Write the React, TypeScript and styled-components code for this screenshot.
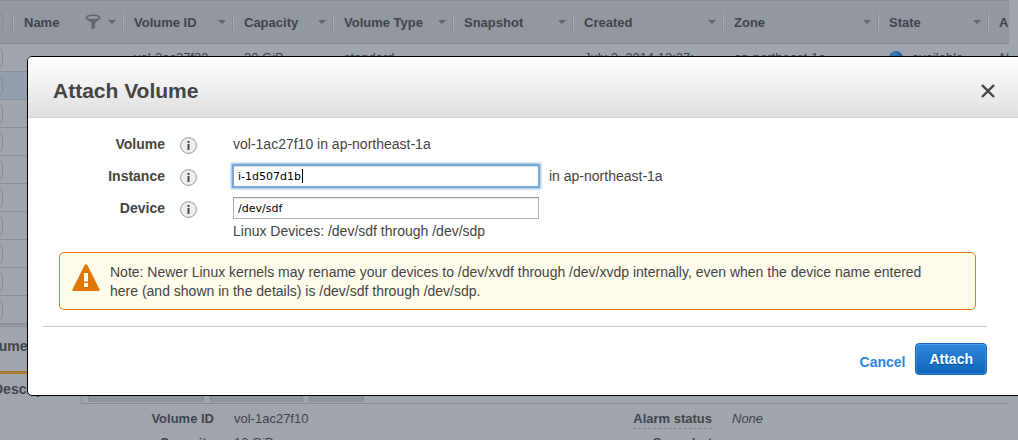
import React from "react";
import styled, { createGlobalStyle, css } from "styled-components";

const GlobalStyle = createGlobalStyle`
  *, *::before, *::after { box-sizing: border-box; }
  html, body { margin: 0; padding: 0; }
  body {
    background: #a0a4ac;
    color: #3f444b;
    font-family: "Liberation Sans", Arial, sans-serif;
    font-size: 13px;
  }
`;

const Page = styled.div`
  position: relative;
  height: 100vh;
  overflow: hidden;
`;

const TableArea = styled.div`
  padding-right: 9px;
  border-bottom: 1px solid #868a93;
`;

const VolumeTable = styled.table`
  width: 100%;
  table-layout: fixed;
  border-collapse: separate;
  border-spacing: 0;
`;

const HeadRow = styled.tr`
  height: 44px;
  background: #93979f;
`;

const HeadCell = styled.th<{ $width?: number }>`
  width: ${(p) => (p.$width ? `${p.$width}px` : "auto")};
  padding: 0;
  border-top: 1px solid #868a93;
  border-bottom: 1px solid #868a93;
  font-weight: bold;
  text-align: left;
  overflow: hidden;
`;

const HeadInner = styled.div`
  display: flex;
  align-items: center;
  gap: 7px;
  height: 18px;
  padding: 0 6px 0 10px;
  border-left: 1px solid #a5a9b1;
  box-shadow: -1px 0 #868a93;
  margin-left: 1px;
  white-space: nowrap;
  span { flex: 1; }
`;

const Row = styled.tr<{ $selected?: boolean }>`
  height: 28px;
  background: ${(p) => (p.$selected ? "#919eab" : "transparent")};
`;

const Cell = styled.td<{ $italic?: boolean }>`
  padding: 0 0 0 12px;
  border-bottom: 1px solid #8b8f97;
  font-style: ${(p) => (p.$italic ? "italic" : "normal")};
  white-space: nowrap;
  overflow: hidden;
`;

const CheckCell = styled(Cell)`
  padding: 0;
`;

const Check = styled.input`
  appearance: none;
  display: block;
  width: 18px;
  height: 18px;
  margin: 0 0 0 -15px;
  border: 1px solid #868a93;
  border-radius: 4px;
`;

const StateValue = styled.span`
  display: flex;
  align-items: center;
  gap: 9px;
`;

const StateDot = styled.i`
  width: 14px;
  height: 14px;
  border-radius: 50%;
  background: radial-gradient(circle at 40% 25%, #3f80b8, #14538f 70%);
`;

const Arrow = styled.i`
  border: 4px solid transparent;
  border-top-color: #62676f;
  border-bottom: 0;
`;

const Details = styled.section`
  margin-top: 1px;
  border-top: 1px solid #868a93;
`;

const DetailTitle = styled.h2`
  margin: 0 0 0 -22px;
  height: 44px;
  line-height: 38px;
  font-size: 14px;
`;

const TabBar = styled.div`
  display: flex;
  align-items: flex-end;
  margin-right: 9px;
`;

const ActiveTab = styled.button`
  width: 81px;
  height: 33px;
  padding: 0;
  border: 0;
  border-top: 3px solid #b07a2e;
  background: none;
  color: inherit;
  font: bold 14px "Liberation Sans", Arial, sans-serif;
  text-align: left;
  text-indent: -7px;
`;

const TabList = styled.div`
  display: flex;
  align-items: flex-end;
  gap: 6px;
  flex: 1;
  height: 33px;
  padding: 0 0 1px 6px;
  border-left: 1px solid #868a93;
  border-bottom: 1px solid #868a93;
`;

const Tab = styled.button`
  height: 30px;
  padding: 0 12px;
  border: 1px solid #868a93;
  border-bottom: 0;
  background: #8f9598;
  color: inherit;
  font: bold 13px "Liberation Sans", Arial, sans-serif;
`;

const Facts = styled.dl`
  display: grid;
  grid-template-columns: 214px minmax(0, 1fr) 214px minmax(0, 1fr);
  grid-auto-rows: 24px;
  margin: 0;
  padding: 3px 22px 0 0;
  line-height: 24px;
  dt { text-align: right; font-weight: bold; }
  dd { margin: 0 0 0 20px; }
  em { display: block; }
`;

const Hint = styled.abbr`
  display: inline-block;
  line-height: 16px;
  height: 18px;
  border-bottom: 1px dashed #81858d;
`;

const Dialog = styled.div`
  position: absolute;
  top: 56px;
  left: 27px;
  right: -16px;
  border: 1px solid #000;
  border-radius: 5px;
  background: #fff;
  color: #444;
  font-size: 14px;
  overflow: hidden;
`;

const DialogHead = styled.header`
  display: flex;
  align-items: center;
  justify-content: space-between;
  height: 61px;
  padding: 7px 38px 0 25px;
  border-bottom: 1px solid #ccc;
  background: linear-gradient(#fff, #dfdfdf);
  h1 { margin: 0; font-size: 21px; line-height: 24px; }
`;

const CloseButton = styled.button`
  display: flex;
  padding: 0;
  border: 0;
  background: none;
`;

const DialogBody = styled.form`
  padding: 10px 46px 20px 15px;
`;

const Field = styled.div`
  display: grid;
  grid-template-columns: 122px 17px minmax(0, 1fr);
  align-items: center;
  min-height: 32px;
  column-gap: 15px;
  label, b { text-align: right; font-weight: bold; }
  svg { margin-top: 2px; }
`;

const Value = styled.div`
  display: flex;
  align-items: center;
  gap: 10px;
  margin-left: 21px;
`;

const InputWrap = styled.div`
  position: relative;
  width: 306px;
`;

const TextInput = styled.input<{ $active?: boolean }>`
  display: block;
  width: 100%;
  height: 22px;
  padding: 0 4px;
  border: 1px solid #b0b0b0;
  border-top-color: #999;
  border-radius: 0;
  outline: none;
  background: #fff;
  color: #000;
  font: 11px "DejaVu Sans", sans-serif;
  box-shadow: inset 0 1px 1px #e8e8e8;
  ${(p) =>
    p.$active &&
    css`
      border-color: #7aa7d6;
      box-shadow: 0 0 0 1px #7aa7d6, 0 0 2px 2px #8fbbe8, inset 0 1px 1px #d5dfea;
    `}
`;

const Caret = styled.i`
  position: absolute;
  top: 4px;
  left: 69px;
  width: 1px;
  height: 14px;
  background: #000;
`;

const Help = styled.p`
  margin: 0 0 0 190px;
  line-height: 14px;
`;

const Note = styled.div`
  display: flex;
  gap: 10px;
  margin: 14px 11px 16px 16px;
  padding: 10px 32px 8px 12px;
  border: 1px solid #e07b00;
  border-radius: 5px;
  background: #fffcec;
  line-height: 19px;
  svg { flex: none; margin-top: 1px; }
  p { margin: 0; }
`;

const Actions = styled.footer`
  display: flex;
  justify-content: flex-end;
  align-items: center;
  gap: 10px;
  padding-top: 16px;
  border-top: 1px solid #ccc;
`;

const Cancel = styled.a`
  padding-top: 6px;
  color: #2e86de;
  font-weight: bold;
  text-decoration: none;
`;

const Attach = styled.button`
  height: 32px;
  padding: 0 13px;
  border: 1px solid #1166bb;
  border-radius: 4px;
  background: linear-gradient(#2e87de, #1166bb);
  box-shadow: inset 0 0 0 1px rgba(255, 255, 255, 0.15);
  color: #fff;
  font: bold 14px "Liberation Sans", Arial, sans-serif;
  text-shadow: 0 1px 1px #0a4a90;
`;

const FilterIcon = () => (
  <svg width="16" height="16" viewBox="0 0 16 16" aria-hidden="true">
    <path
      d="M.5 3.500C.5 1.500 4 .5 8 .5s7.500 1 7.500 3c0 1.800-3 3-5.500 5.500v5L6.500 15.500V9C4 6.500.5 5.300.5 3.500z"
      fill="#62676f"
    />
    <ellipse cx="8" cy="3.400" rx="5.800" ry="1.400" fill="#9a9ea6" />
  </svg>
);

const InfoIcon = () => (
  <svg width="17" height="17" viewBox="0 0 17 17" role="img" aria-label="Info">
    <circle cx="8.500" cy="8.500" r="7.900" fill="#eee" stroke="#999" />
    <path d="M7.500 4h2v2h-2zM7.500 7h2v6h-2z" fill="#444" />
  </svg>
);

const WarningIcon = () => (
  <svg width="28" height="28" viewBox="0 0 28 28" aria-hidden="true">
    <path d="M12.400 1.500q1.600-2.600 3.200 0l12 24q.7 1.500-1 1.500H1.400q-1.700 0-1-1.500z" fill="#e07700" />
    <path d="M12 9h4v8.500h-4zM12 19h4v4h-4z" fill="#fff" />
  </svg>
);

const columns: [string, number][] = [
  ["Name", 110],
  ["Volume ID", 110],
  ["Capacity", 100],
  ["Volume Type", 120],
  ["Snapshot", 120],
  ["Created", 150],
  ["Zone", 155],
  ["State", 110],
];

const emptyRows = Array.from({ length: 9 }, (_, i) => i);

export default function App() {
  return (
    <Page>
      <GlobalStyle />
      <TableArea>
        <VolumeTable>
          <thead>
            <HeadRow>
              <HeadCell $width={12}>
                <Check type="checkbox" aria-label="Select all volumes" />
              </HeadCell>
              {columns.map(([label, width]) => (
                <HeadCell key={label} $width={width}>
                  <HeadInner>
                    <span>{label}</span>
                    {label === "Name" && <FilterIcon />}
                    <Arrow />
                  </HeadInner>
                </HeadCell>
              ))}
              <HeadCell>
                <HeadInner>A</HeadInner>
              </HeadCell>
            </HeadRow>
          </thead>
          <tbody>
            <Row>
              <CheckCell>
                <Check type="checkbox" aria-label="Select volume" />
              </CheckCell>
              <Cell />
              <Cell>vol-3ac27f20</Cell>
              <Cell>20 GiB</Cell>
              <Cell>standard</Cell>
              <Cell />
              <Cell>July 3, 2014 12:37:</Cell>
              <Cell>ap-northeast-1a</Cell>
              <Cell>
                <StateValue>
                  <StateDot />
                  available
                </StateValue>
              </Cell>
              <Cell $italic>N</Cell>
            </Row>
            {emptyRows.map((i) => (
              <Row key={i} $selected={i === 0}>
                <CheckCell>
                  <Check type="checkbox" aria-label="Select volume" />
                </CheckCell>
                <Cell colSpan={9} />
              </Row>
            ))}
          </tbody>
        </VolumeTable>
      </TableArea>

      <Details>
        <DetailTitle>Volumes:</DetailTitle>
        <TabBar>
          <ActiveTab type="button">Description</ActiveTab>
          <TabList>
            <Tab type="button">Status Checks</Tab>
            <Tab type="button">Monitoring</Tab>
            <Tab type="button">Tags</Tab>
          </TabList>
        </TabBar>
        <Facts>
          <dt>Volume ID</dt>
          <dd>vol-1ac27f10</dd>
          <dt>
            <Hint>Alarm status</Hint>
          </dt>
          <dd>
            <em>None</em>
          </dd>
          <dt>Capacity</dt>
          <dd>10 GiB</dd>
          <dt>Snapshot</dt>
          <dd />
        </Facts>
      </Details>

      <Dialog role="dialog" aria-labelledby="dialog-title">
        <DialogHead>
          <h1 id="dialog-title">Attach Volume</h1>
          <CloseButton type="button" aria-label="Close">
            <svg width="14" height="14" viewBox="0 0 14 14">
              <path d="M1 1l12 12M13 1L1 13" stroke="#444" strokeWidth="2.400" />
            </svg>
          </CloseButton>
        </DialogHead>
        <DialogBody onSubmit={(e) => e.preventDefault()}>
          <Field>
            <b>Volume</b>
            <InfoIcon />
            <Value>vol-1ac27f10 in ap-northeast-1a</Value>
          </Field>
          <Field>
            <label htmlFor="instance">Instance</label>
            <InfoIcon />
            <Value>
              <InputWrap>
                <TextInput id="instance" $active defaultValue="i-1d507d1b" />
                <Caret />
              </InputWrap>
              <span>in ap-northeast-1a</span>
            </Value>
          </Field>
          <Field>
            <label htmlFor="device">Device</label>
            <InfoIcon />
            <Value>
              <InputWrap>
                <TextInput id="device" defaultValue="/dev/sdf" />
              </InputWrap>
            </Value>
          </Field>
          <Help>Linux Devices: /dev/sdf through /dev/sdp</Help>
          <Note>
            <WarningIcon />
            <p>
              Note: Newer Linux kernels may rename your devices to /dev/xvdf through /dev/xvdp
              internally, even when the device name entered here (and shown in the details) is
              /dev/sdf through /dev/sdp.
            </p>
          </Note>
          <Actions>
            <Cancel href="#cancel">Cancel</Cancel>
            <Attach type="submit">Attach</Attach>
          </Actions>
        </DialogBody>
      </Dialog>
    </Page>
  );
}
